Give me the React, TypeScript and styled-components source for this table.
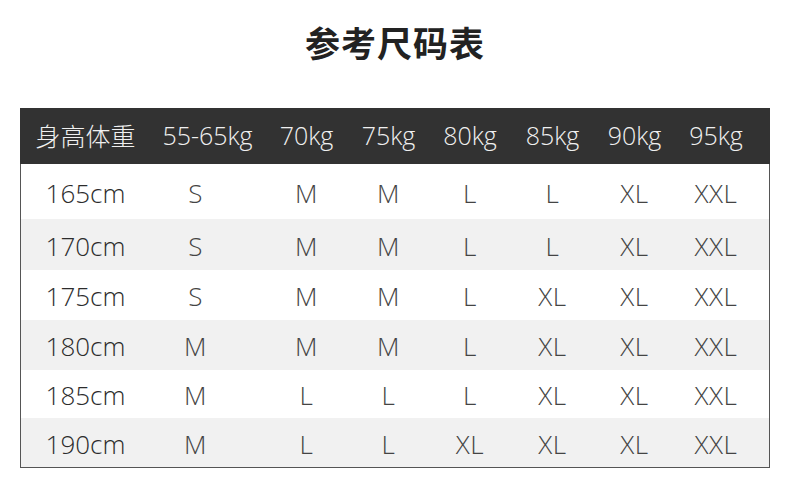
import React from 'react'
import styled, { createGlobalStyle } from 'styled-components'

const GlobalStyle = createGlobalStyle`
  html, body {
    margin: 0;
    padding: 0;
    background: #fff;
  }
  body {
    font-family: "Open Sans", "Noto Sans CJK SC", sans-serif;
  }
`

const Page = styled.div`
  width: 790px;
  height: 501px;
  box-sizing: border-box;
  padding: 0 20px;
  display: flex;
  flex-direction: column;
`

const Title = styled.h1`
  margin: 0;
  height: 108px;
  display: flex;
  align-items: center;
  justify-content: center;
  padding-bottom: 26px;
  box-sizing: border-box;
  font-family: "Noto Sans CJK SC", sans-serif;
  font-size: 35px;
  font-weight: 700;
  color: #222;
  letter-spacing: 1px;
`

const Table = styled.div`
  width: 750px;
  box-sizing: border-box;
  border: 1px solid #555;
  border-top: none;
`

const columns = '129px 115px 83px 81px 82px 83px 81px 82px'

const Row = styled.div<{ $shade?: boolean; $h: number }>`
  display: grid;
  grid-template-columns: ${columns};
  height: ${p => p.$h}px;
  align-items: center;
  background: ${p => (p.$shade ? '#f1f1f1' : '#fff')};
`

const HeadRow = styled.div`
  display: grid;
  grid-template-columns: ${columns};
  height: 56px;
  align-items: center;
  background: #323232;
  margin: 0 -1px;
  padding-left: 1px;
`

const HeadCell = styled.div`
  text-align: center;
  color: #f0f0f0;
  font-size: 25px;
  font-weight: 300;
  font-family: "Open Sans", "Noto Sans CJK SC", sans-serif;
  padding-bottom: 2px;
`

const Cell = styled.div<{ $first?: boolean; $nudge?: number }>`
  text-align: center;
  color: ${p => (p.$first ? '#2c2c2c' : '#444')};
  font-size: 26px;
  font-weight: 300;
  letter-spacing: ${p => (p.$first ? 0 : 0.5)}px;
  padding-right: ${p => p.$nudge ?? 0}px;
  padding-top: 2px;
`

const heads = ['身高体重', '55-65kg', '70kg', '75kg', '80kg', '85kg', '90kg', '95kg']

const rows: { h: string; s: string[]; height: number }[] = [
  { h: '165cm', s: ['S', 'M', 'M', 'L', 'L', 'XL', 'XXL'], height: 55 },
  { h: '170cm', s: ['S', 'M', 'M', 'L', 'L', 'XL', 'XXL'], height: 51 },
  { h: '175cm', s: ['S', 'M', 'M', 'L', 'XL', 'XL', 'XXL'], height: 50 },
  { h: '180cm', s: ['M', 'M', 'M', 'L', 'XL', 'XL', 'XXL'], height: 50 },
  { h: '185cm', s: ['M', 'L', 'L', 'L', 'XL', 'XL', 'XXL'], height: 48 },
  { h: '190cm', s: ['M', 'L', 'L', 'XL', 'XL', 'XL', 'XXL'], height: 49 },
]

export default function App() {
  return (
    <Page>
      <GlobalStyle />
      <Title>参考尺码表</Title>
      <Table>
        <HeadRow>
          {heads.map(t => (
            <HeadCell key={t}>{t}</HeadCell>
          ))}
        </HeadRow>
        {rows.map((r, i) => (
          <Row key={r.h} $shade={i % 2 === 1} $h={r.height}>
            <Cell $first>{r.h}</Cell>
            {r.s.map((s, j) => (
              <Cell key={j} $nudge={j === 0 ? 24 : 0}>
                {s}
              </Cell>
            ))}
          </Row>
        ))}
      </Table>
    </Page>
  )
}
